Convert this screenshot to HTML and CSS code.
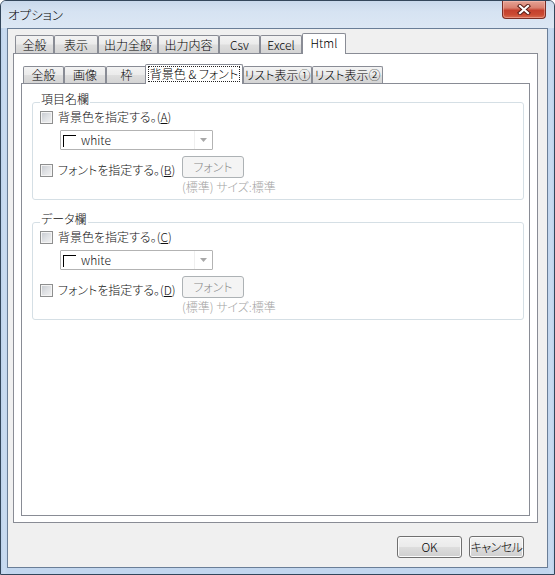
FILE: index.html
```html
<!DOCTYPE html>
<html lang="ja">
<head>
<meta charset="utf-8">
<title>オプション</title>
<link rel="stylesheet" href="styles.css">
</head>
<body>
<div class="window">
  <div class="titlebar">
    <span class="title">オプション</span>
    <div class="close">
      <svg width="14" height="11" viewBox="0 0 14 11">
        <path d="M3 2 L11 9 M11 2 L3 9" stroke="#5a1d16" stroke-width="4.2" stroke-linecap="square"/>
        <path d="M3 2 L11 9 M11 2 L3 9" stroke="#ffffff" stroke-width="2.2" stroke-linecap="square"/>
      </svg>
    </div>
  </div>
  <div class="client">
    <div class="tabctl outer">
      <div class="strip">
        <div class="tab o1">全般</div>
        <div class="tab o2">表示</div>
        <div class="tab o3">出力全般</div>
        <div class="tab o4">出力内容</div>
        <div class="tab o5">Csv</div>
        <div class="tab o6">Excel</div>
        <div class="tab sel o7">Html</div>
      </div>
      <div class="page outer-page">
        <div class="tabctl inner">
          <div class="strip">
            <div class="tab i1">全般</div>
            <div class="tab i2">画像</div>
            <div class="tab i3">枠</div>
            <div class="tab sel i4"><span class="focus">背景色 &amp; フォント</span></div>
            <div class="tab i5">リスト表示①</div>
            <div class="tab i6">リスト表示②</div>
          </div>
          <div class="page inner-page">
            <div class="group">
              <div class="group-title">項目名欄</div>
              <div class="check"><span class="box"></span><span>背景色を指定する。(<u>A</u>)</span></div>
              <div class="combo">
                <span class="swatch"></span>
                <span class="combo-text">white</span>
                <span class="combo-btn"><svg width="7" height="4" viewBox="0 0 7 4"><path d="M0 0 H7 L3.5 4 Z" fill="#a8a8a8"/></svg></span>
              </div>
              <div class="font-row">
                <div class="check"><span class="box"></span><span>フォントを指定する。(<u>B</u>)</span></div>
                <div class="btn disabled font-btn">フォント</div>
              </div>
              <div class="note">(標準) サイズ:標準</div>
            </div>
            <div class="group">
              <div class="group-title">データ欄</div>
              <div class="check"><span class="box"></span><span>背景色を指定する。(<u>C</u>)</span></div>
              <div class="combo">
                <span class="swatch"></span>
                <span class="combo-text">white</span>
                <span class="combo-btn"><svg width="7" height="4" viewBox="0 0 7 4"><path d="M0 0 H7 L3.5 4 Z" fill="#a8a8a8"/></svg></span>
              </div>
              <div class="font-row">
                <div class="check"><span class="box"></span><span>フォントを指定する。(<u>D</u>)</span></div>
                <div class="btn disabled font-btn">フォント</div>
              </div>
              <div class="note">(標準) サイズ:標準</div>
            </div>
          </div>
        </div>
      </div>
    </div>
    <div class="buttons">
      <div class="btn ok">OK</div>
      <div class="btn cancel">キャンセル</div>
    </div>
  </div>
</div>
</body>
</html>
```

FILE: styles.css
```css
html, body {
  margin: 0;
  padding: 0;
  background: #ffffff;
}

body {
  font-family: "Noto Sans CJK JP", "Noto Sans", sans-serif;
  font-size: 12px;
  font-weight: 300;
  font-feature-settings: "palt" 1;
  color: #111111;
}

.window {
  width: 555px;
  height: 575px;
  box-sizing: border-box;
  border: 1px solid #33465b;
  border-radius: 6px 6px 0 0;
  background: linear-gradient(90deg, #bcd2ec 0, #cadcf1 3px, #c2d6ee 6px, #c2d6ee 548px, #cadcf1 550px, #bcd2ec 553px);
  display: flex;
  flex-direction: column;
  overflow: hidden;
}

.titlebar {
  height: 27px;
  flex: none;
  display: flex;
  justify-content: space-between;
  align-items: flex-start;
  padding-left: 7px;
  background: linear-gradient(#c8d8eb 0, #d6e3f2 40%, #dce7f4 100%);
}

.title {
  margin-top: 6px;
  line-height: 16px;
  font-size: 12.5px;
  color: #000;
}

.close {
  width: 44px;
  height: 18px;
  box-sizing: border-box;
  margin-right: 8px;
  border: 1px solid #7a2e25;
  border-top: none;
  border-radius: 0 0 4px 4px;
  background: linear-gradient(#e5a395 0%, #d9806f 40%, #c4402d 55%, #cb4b33 80%, #d86c50 100%);
  box-shadow: inset 0 0 0 1px rgba(255, 200, 190, 0.45);
  display: flex;
  align-items: center;
  justify-content: center;
}

.client {
  flex: 1;
  margin: 0 6px 6px;
  border: 1px solid #6a7e97;
  background: #f0f0f0;
  display: flex;
  flex-direction: column;
}

/* tab controls */
.tabctl {
  display: flex;
  flex-direction: column;
  flex: 1;
}

.outer {
  margin: 4px 9px 0 5px;
}

.strip {
  display: flex;
  align-items: flex-end;
  padding-left: 2px;
  flex: none;
}

.outer > .strip {
  height: 20px;
}

.inner > .strip {
  height: 19px;
}

.tab {
  box-sizing: border-box;
  border: 1px solid #898c95;
  border-bottom: none;
  border-radius: 2px 2px 0 0;
  background: linear-gradient(#f3f3f3 0%, #ebebeb 48%, #dedede 52%, #d4d4d4 100%);
  text-align: center;
  white-space: nowrap;
  color: #000;
}

.outer .tab {
  height: 18px;
  line-height: 17px;
}

.outer .tab.sel {
  height: 21px;
  line-height: 18px;
  margin-bottom: -1px;
  background: #ffffff;
  position: relative;
  z-index: 1;
}

.inner .tab {
  height: 17px;
  line-height: 16px;
}

.inner .tab.sel {
  height: 20px;
  margin-bottom: -1px;
  margin-left: -2px;
  background: #ffffff;
  position: relative;
  z-index: 1;
}

.focus {
  display: block;
  box-sizing: border-box;
  height: 16px;
  margin: 1px 2px 0;
  border: 1px dotted #222;
  line-height: 14px;
  white-space: pre;
}

.o1 { width: 39px; }
.o2 { width: 44px; }
.o3 { width: 60px; }
.o4 { width: 61px; }
.o5 { width: 41px; }
.o6 { width: 42px; }
.o7 { width: 44px; }

.i1 { width: 41px; }
.i2 { width: 42px; }
.i3 { width: 41px; }
.i4 { width: 98px; }
.i5 { width: 69px; }
.i6 { width: 71px; }

.page {
  flex: 1;
  border: 1px solid #898c95;
  background: #ffffff;
  display: flex;
  flex-direction: column;
}

.outer-page {
  padding: 10px 7px 6px;
}

.inner-page {
  padding: 18px 5px 0 10px;
}

/* group boxes */
.group {
  position: relative;
  border: 1px solid #d5dfe5;
  border-radius: 3px;
  padding: 6px 0 4px 7px;
}

.group + .group {
  margin-top: 22px;
}

.group-title {
  position: absolute;
  left: 7px;
  top: -12px;
  padding: 0 1px;
  background: #ffffff;
  line-height: 16px;
}

.check {
  display: flex;
  align-items: center;
  gap: 5px;
  height: 16px;
  line-height: 16px;
  white-space: nowrap;
}

.box {
  flex: none;
  width: 13px;
  height: 13px;
  box-sizing: border-box;
  border: 1px solid #8e8f8f;
  background: linear-gradient(135deg, #c4c8ce 0%, #dfe1e4 50%, #f3f3f3 100%);
  box-shadow: inset 0 0 0 1px #f4f4f4;
}

.combo {
  margin: 5px 0 0 20px;
  width: 153px;
  height: 20px;
  box-sizing: border-box;
  border: 1px solid #b3b3b3;
  border-radius: 1px;
  background: #ffffff;
  display: flex;
  align-items: center;
}

.swatch {
  width: 13px;
  height: 12px;
  margin-left: 2px;
  margin-top: 1px;
  box-sizing: border-box;
  border-top: 1px solid #000;
  border-left: 1px solid #000;
}

.combo-text {
  margin-left: 5px;
  flex: 1;
  line-height: 16px;
}

.combo-btn {
  width: 18px;
  height: 18px;
  box-sizing: border-box;
  border-left: 1px solid #efefef;
  display: flex;
  align-items: center;
  justify-content: center;
}

.font-row {
  display: flex;
  align-items: flex-start;
  margin-top: 6px;
}

.font-row .check {
  width: 142px;
  margin-top: 6px;
  flex: none;
}

.btn {
  box-sizing: border-box;
  height: 22px;
  line-height: 20px;
  text-align: center;
  white-space: nowrap;
  border: 1px solid #707070;
  border-radius: 3px;
  background: linear-gradient(#f2f2f2 0%, #ebebeb 48%, #dddddd 52%, #cfcfcf 100%);
  box-shadow: inset 0 0 0 1px #fbfbfb;
  color: #000;
}

.btn.disabled {
  border-color: #adb2b5;
  background: #f4f4f4;
  box-shadow: none;
  color: #8a8a8a;
}

.font-btn {
  width: 62px;
}

.note {
  margin: 1px 0 0 142px;
  line-height: 16px;
  color: #a3a3a3;
}

/* dialog buttons */
.buttons {
  flex: none;
  height: 44px;
  box-sizing: border-box;
  padding: 13px 23px 0 0;
  display: flex;
  justify-content: flex-end;
  align-items: flex-start;
  gap: 7px;
}

.ok {
  width: 65px;
}

.cancel {
  width: 55px;
  letter-spacing: -0.5px;
}
```
